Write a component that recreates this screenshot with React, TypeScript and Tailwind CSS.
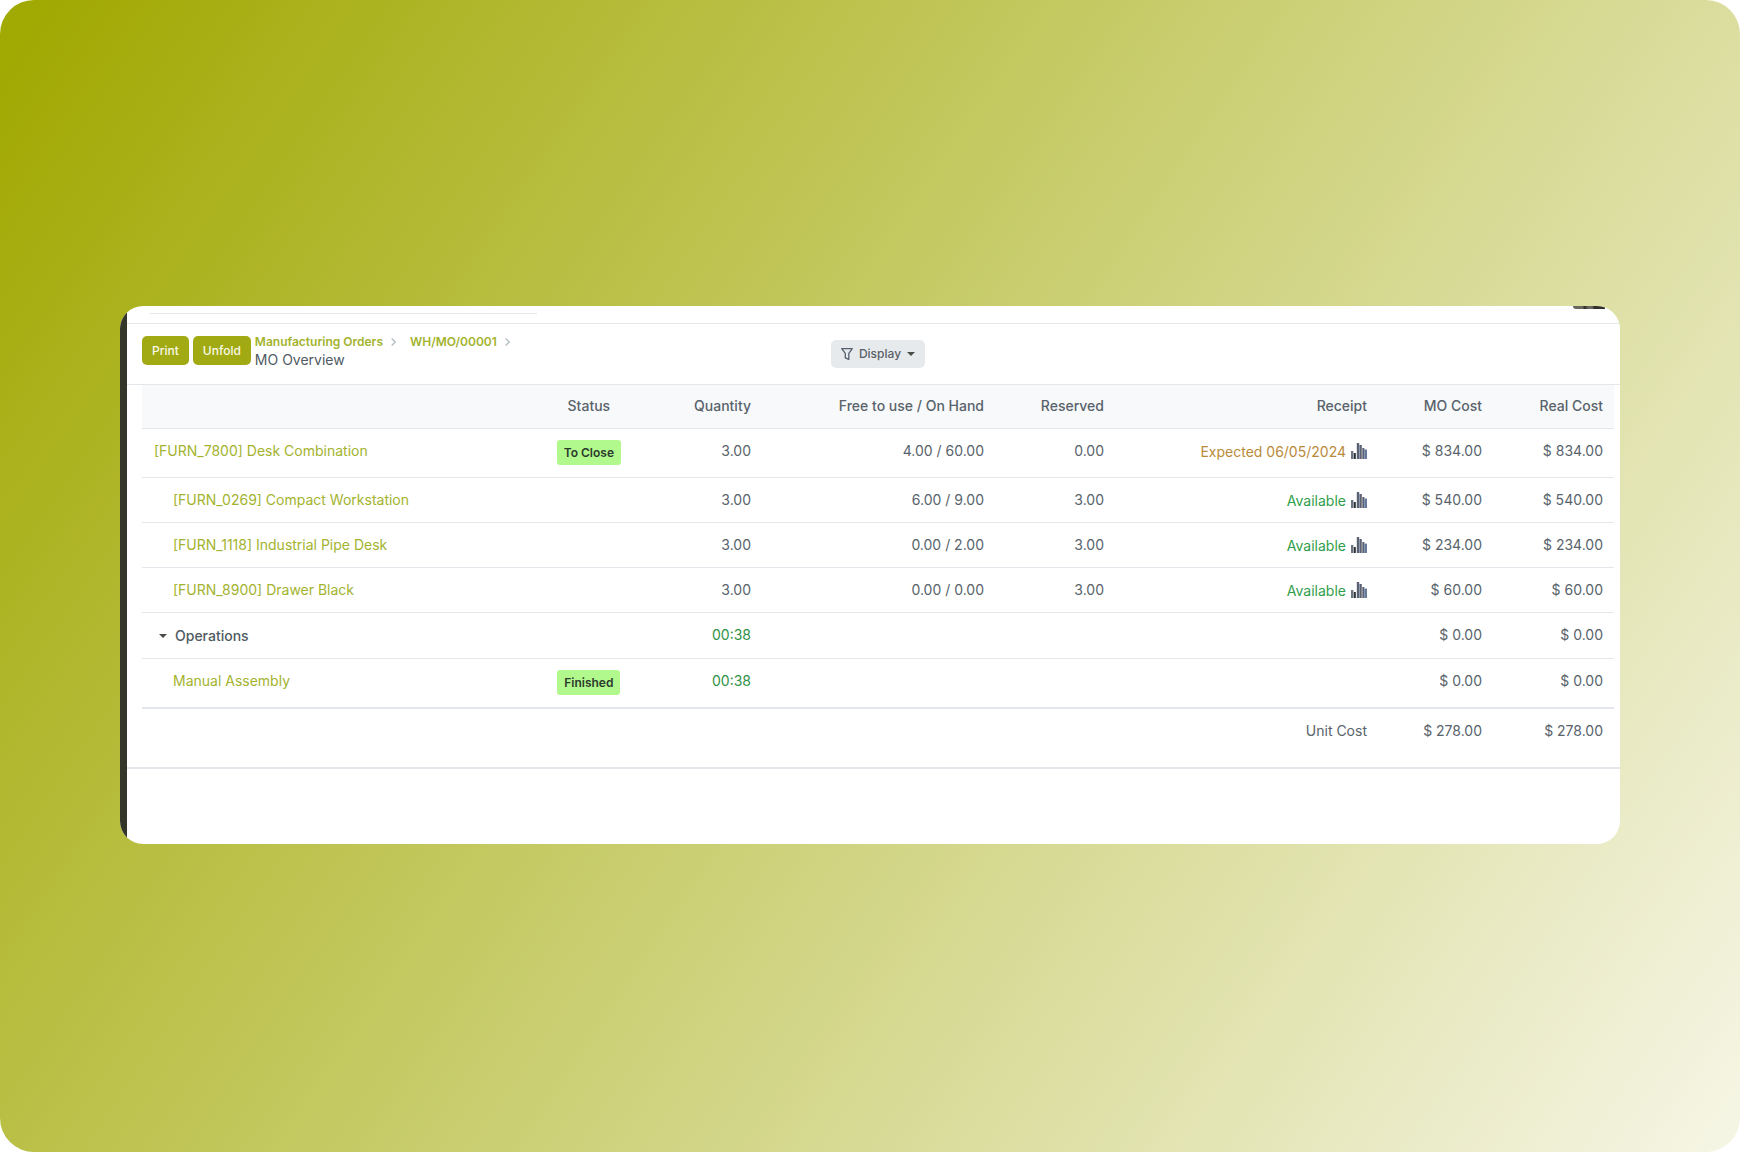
import React from "react";

type Row = {
  name: string;
  kind: "root" | "child" | "group";
  status?: string;
  quantity: string;
  late?: boolean;
  free?: string;
  reserved?: string;
  receipt?: string;
  moCost: string;
  realCost: string;
};

const rows: Row[] = [
  { name: "[FURN_7800] Desk Combination", kind: "root", status: "To Close", quantity: "3.00", free: "4.00 / 60.00", reserved: "0.00", receipt: "Expected 06/05/2024", late: true, moCost: "$ 834.00", realCost: "$ 834.00" },
  { name: "[FURN_0269] Compact Workstation", kind: "child", quantity: "3.00", free: "6.00 / 9.00", reserved: "3.00", receipt: "Available", moCost: "$ 540.00", realCost: "$ 540.00" },
  { name: "[FURN_1118] Industrial Pipe Desk", kind: "child", quantity: "3.00", free: "0.00 / 2.00", reserved: "3.00", receipt: "Available", moCost: "$ 234.00", realCost: "$ 234.00" },
  { name: "[FURN_8900] Drawer Black", kind: "child", quantity: "3.00", free: "0.00 / 0.00", reserved: "3.00", receipt: "Available", moCost: "$ 60.00", realCost: "$ 60.00" },
  { name: "Operations", kind: "group", quantity: "00:38", moCost: "$ 0.00", realCost: "$ 0.00" },
  { name: "Manual Assembly", kind: "child", status: "Finished", quantity: "00:38", moCost: "$ 0.00", realCost: "$ 0.00" },
];

function Caret() {
  return (
    <svg className="h-1 w-2 shrink-0" viewBox="0 0 8 4" fill="#4b4b48" aria-hidden="true">
      <path d="M0 0h8L4 4z" />
    </svg>
  );
}

function Chevron() {
  return (
    <svg className="h-2 w-[5px]" viewBox="0 0 5 8" fill="none" stroke="#b4bfc4" strokeWidth="1.4" aria-hidden="true">
      <path d="M0.7 0.5L4.3 4L0.7 7.5" />
    </svg>
  );
}

function Funnel() {
  return (
    <svg className="h-3 w-3" viewBox="0 0 12 12" fill="none" stroke="#56606e" strokeWidth="1.3" strokeLinejoin="round" aria-hidden="true">
      <path d="M0.7 0.7H11.3L7.8 5.4V11.4L4.3 9.8V5.4Z" />
    </svg>
  );
}

function BarChart() {
  return (
    <svg className="h-4 w-4" viewBox="0 0 16 16" aria-hidden="true">
      <path fill="#6b7280" d="M0 8h2.4v8H0z" />
      <path fill="#2b3033" d="M2.8 10h2v6h-2z" />
      <path fill="#5a6172" d="M5.8 0h2.4v16H5.8z" />
      <path fill="#7c8aa0" d="M8.2 2h0.8v14H8.2z" />
      <path fill="#5a6172" d="M9 2h1.8v14H9z" />
      <path fill="#c8ab90" d="M10.8 5h0.6v11h-0.6z" />
      <path fill="#56617a" d="M11.4 5h2v11h-2z" />
      <path fill="#66799a" d="M13.4 6.6h2.6V16h-2.6z" />
    </svg>
  );
}

function Crumb({ children }: { children: React.ReactNode }) {
  return (
    <li className="flex items-center gap-2">
      <a href="#" className="text-[#a3b32e]">
        {children}
      </a>
      <Chevron />
    </li>
  );
}

function Name({ row }: { row: Row }) {
  if (row.kind === "group") {
    return (
      <button type="button" className="ml-[5px] flex items-center gap-2 leading-[22px] font-medium text-[#4f5a62]">
        <Caret />
        {row.name}
      </button>
    );
  }
  return (
    <a href="#" className={row.kind === "child" ? "ml-[19px] text-[#a3b32e]" : "text-[#a3b32e]"}>
      {row.name}
    </a>
  );
}

function rowClass(row: Row, last: boolean) {
  if (last) return "h-[50px] border-b-2 border-[#e3e6ea]";
  if (row.status) return "h-[49px] border-b border-[#e3e6ea]";
  if (row.kind === "group") return "h-[46px] border-b border-[#e3e6ea]";
  return "h-[45px] border-b border-[#e3e6ea]";
}

function OverviewRow({ row, last }: { row: Row; last: boolean }) {
  return (
    <tr className={rowClass(row, last)}>
      <td className="px-3 pt-3 text-left">
        <Name row={row} />
      </td>
      <td className="pt-[11px] text-center">
        {row.status && (
          <span className="inline-block rounded-[3px] bg-[#b1f98c] px-[7px] align-top text-xs leading-[25px] font-semibold text-[#2c3a2c]">
            {row.status}
          </span>
        )}
      </td>
      <td className={row.quantity.includes(":") ? "px-3 pt-3 text-[#2f9246]" : "px-3 pt-3"}>{row.quantity}</td>
      <td className="px-3 pt-3">{row.free}</td>
      <td className="px-3 pt-3">{row.reserved}</td>
      <td className="px-3 pt-3">
        {row.receipt && (
          <div className="flex items-start justify-end gap-[5px] leading-[22px]">
            <span className={row.late ? "text-[#b98a3a]" : "text-[#2f9e4b]"}>{row.receipt}</span>
            <button type="button" aria-label="Forecast report" className="pt-0.5">
              <BarChart />
            </button>
          </div>
        )}
      </td>
      <td className="px-3 pt-3">{row.moCost}</td>
      <td className="px-[11px] pt-3">{row.realCost}</td>
    </tr>
  );
}

function App() {
  return (
    <div className="bg-white font-[Inter,sans-serif]">
      <main className="flex min-h-screen items-center rounded-[34px] bg-[linear-gradient(124deg,#a1a903_2%,#f5f5e4_99%)] px-[120px] py-16">
        <div className="mb-[2px] flex w-full overflow-hidden rounded-[23px] bg-white text-sm text-[#58636b]">
          <div className="w-[7px] shrink-0 bg-[#35362a]" />
          <div className="min-w-0 flex-1 pb-[75px]">
            <div className="flex h-[18px] items-start justify-between border-b border-[#e3e6ea] pr-[15px] pl-[23px]">
              <div className="h-2 w-[387px] border-b border-[#e3e6ea]" />
              <div className="h-[3px] w-8 rounded-bl-sm bg-[linear-gradient(90deg,#6a675e_30%,#33322a_36%,#6a675e_48%,#6a675e_60%,#33322a_66%)]" />
            </div>

            <header className="grid h-[61px] grid-cols-[1fr_auto_1fr] items-start border-b border-[#e3e6ea] pr-[6px] pl-[15px]">
              <div className="flex gap-1 pt-[11px]">
                <button type="button" className="mt-px h-[29px] rounded-[5px] bg-[#a1aa12] px-[10px] text-xs font-medium text-[#f8f9e8]">
                  Print
                </button>
                <button type="button" className="mt-px h-[29px] rounded-[5px] bg-[#a1aa12] px-[10px] text-xs font-medium text-[#f8f9e8]">
                  Unfold
                </button>
                <nav aria-label="Breadcrumb">
                  <ol className="flex gap-[14px] text-xs leading-[13px] font-semibold">
                    <Crumb>Manufacturing Orders</Crumb>
                    <Crumb>WH/MO/00001</Crumb>
                  </ol>
                  <h1 className="text-sm leading-6 text-[#4f5a62]">MO Overview</h1>
                </nav>
              </div>
              <button type="button" className="mt-4 flex h-7 items-center gap-[6px] rounded-[5px] bg-[#e7eaed] px-[10px] text-xs font-medium text-[#5a6068]">
                <Funnel />
                Display
                <Caret />
              </button>
            </header>

            <div className="border-b-2 border-[#e3e6ea] pr-[6px] pb-[14px] pl-[15px]">
              <table className="w-full table-fixed border-collapse text-right whitespace-nowrap [&_td]:align-top">
                <colgroup>
                  <col />
                  <col className="w-[6%]" />
                  <col className="w-[130px]" />
                  <col className="w-[233px]" />
                  <col className="w-[120px]" />
                  <col className="w-[263px]" />
                  <col className="w-[115px]" />
                  <col className="w-[120px]" />
                </colgroup>
                <thead>
                  <tr className="h-[43px] border-b border-[#e3e6ea] bg-[#f8f9fb] text-[#58636b] [&>th]:font-medium">
                    <th aria-label="Product" />
                    <th className="text-center">Status</th>
                    <th className="px-3">Quantity</th>
                    <th className="px-3">Free to use / On Hand</th>
                    <th className="px-3">Reserved</th>
                    <th className="px-3">Receipt</th>
                    <th className="px-3">MO Cost</th>
                    <th className="px-[11px]">Real Cost</th>
                  </tr>
                </thead>
                <tbody>
                  {rows.map((row, i) => (
                    <OverviewRow key={row.name} row={row} last={i === rows.length - 1} />
                  ))}
                </tbody>
                <tfoot>
                  <tr className="h-[45px]">
                    <td colSpan={6} className="px-3 pt-3">
                      Unit Cost
                    </td>
                    <td className="px-3 pt-3">$ 278.00</td>
                    <td className="px-[11px] pt-3">$ 278.00</td>
                  </tr>
                </tfoot>
              </table>
            </div>
          </div>
        </div>
      </main>
    </div>
  );
}

export default App;
